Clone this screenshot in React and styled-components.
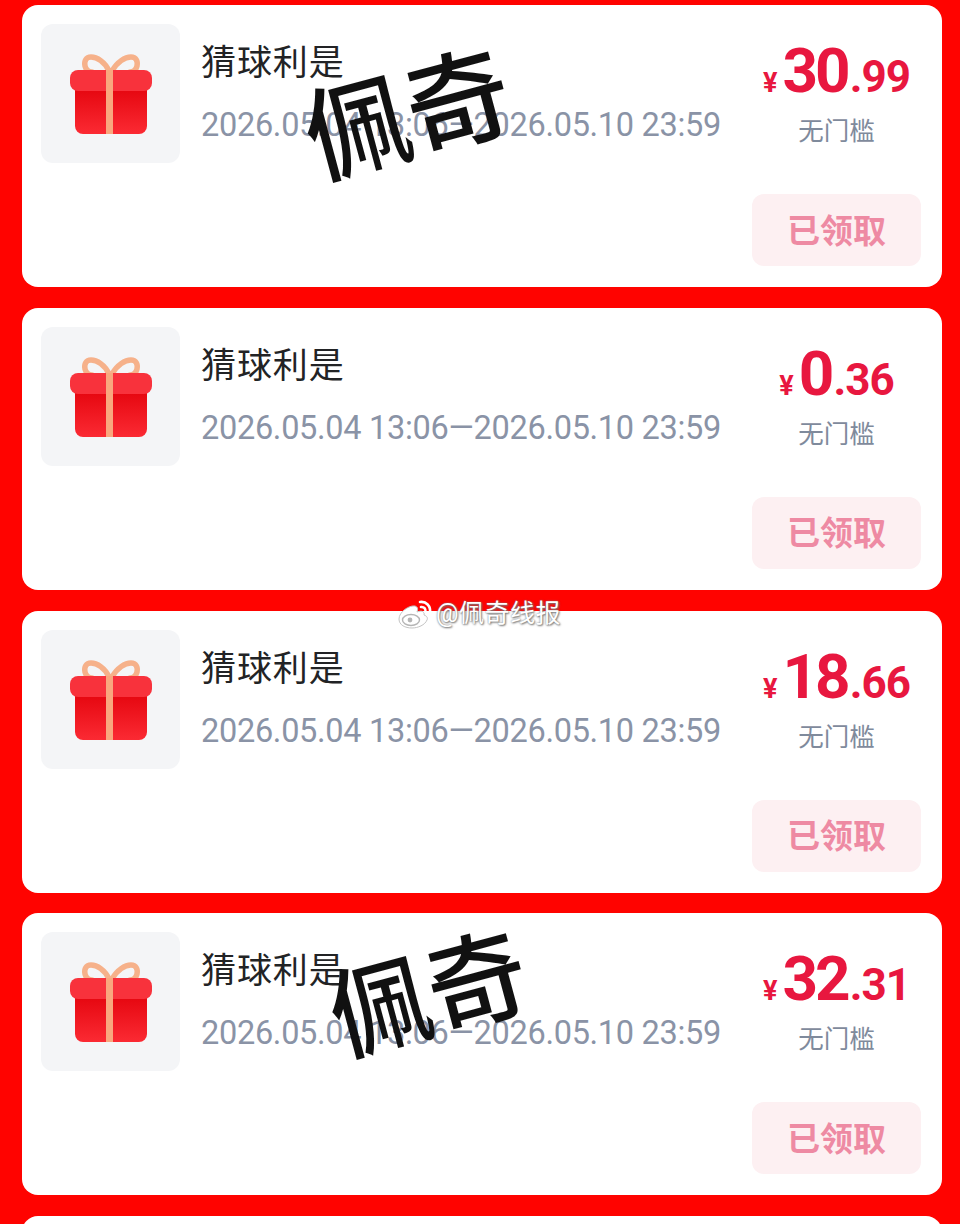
import React from 'react'
import styled, { createGlobalStyle } from 'styled-components'

const coupons = [
  { big: '30', small: '99', stamp: 'top' },
  { big: '0', small: '36' },
  { big: '18', small: '66' },
  { big: '32', small: '31', stamp: 'bottom' },
]

// component
const GiftIcon = () => (
  <svg width="84" height="84" viewBox="0 0 84 84">
    <defs>
      <linearGradient id="giftBody" x1="0" y1="0" x2="0" y2="1">
        <stop offset="0" stopColor="#e5060f" />
        <stop offset="1" stopColor="#fb2a33" />
      </linearGradient>
    </defs>
    <path d="M40 17C36 8 28 3 22 3c-5 0-7 4-6 9 1 4 4 6 7 6M43 17c5-9 13-14 19-14 5 0 7 4 6 9-1 4-4 6-7 6" fill="none" stroke="#f6b18a" strokeWidth="5.5" strokeLinecap="round" />
    <path d="M6 34h72v38a8 8 0 0 1-8 8H14a8 8 0 0 1-8-8z" fill="url(#giftBody)" />
    <rect x="1" y="16" width="82" height="21" rx="8" fill="#f8323c" />
    <rect x="37" y="16" width="7" height="64" fill="#f9a77e" />
  </svg>
)

const WeiboIcon = () => (
  <svg width="36" height="30" viewBox="0 0 36 30">
    <path d="M2 20C2 13 12 6 18 7c3 1 3 3 2 6 5-2 8 0 7 3 3 1 4 3 3 5-2 5-9 8-15 8C8 29 2 26 2 20z" fill="#fff" stroke="#c4c4c4" strokeWidth="1" />
    <ellipse cx="14" cy="21" rx="8.5" ry="5.5" fill="none" stroke="#b5b5b5" strokeWidth="1.4" />
    <circle cx="13" cy="21" r="2.4" fill="#b5b5b5" />
    <path d="M23 3c6-1 11 4 10 11M24 8c3-.5 5 2 4.5 5" fill="none" stroke="#fff" strokeWidth="2.6" strokeLinecap="round" />
  </svg>
)

const Coupon = ({ big, small, stamp }) => (
  <Card>
    <IconBox><GiftIcon /></IconBox>
    <Info>
      <Title>猜球利是</Title>
      <DateRange>2026.05.04 13:06—2026.05.10 23:59</DateRange>
    </Info>
    <Side>
      <Summary>
        <Price>
          <Yen>¥</Yen>
          <Big>{big}</Big>
          <Small>.{small}</Small>
        </Price>
        <Note>无门槛</Note>
      </Summary>
      <Claimed>已领取</Claimed>
    </Side>
    {stamp && <Stamp $place={stamp}>佩奇</Stamp>}
  </Card>
)

export default function App() {
  return (
    <Page>
      <GlobalStyle />
      {coupons.map((c, i) => (
        <Coupon key={i} {...c} />
      ))}
      {/* the next coupon only just starts at the bottom edge */}
      <Card />
      <Mark>
        <WeiboIcon />
        <MarkText>@佩奇线报</MarkText>
      </Mark>
    </Page>
  )
}

// view(CSS in JS)
const GlobalStyle = createGlobalStyle`
  html, body {
    margin: 0;
    height: 1224px;
    overflow: hidden;
    background: #ff0000;
  }
`

const Page = styled.div`
  position: relative;
  box-sizing: border-box;
  height: 1224px;
  overflow: hidden;
  padding: 5px 18px 0 22px;
  display: flex;
  flex-direction: column;
  gap: 20.75px;
  background: #ff0300;
  font-family: "Roboto", "Noto Sans CJK SC", sans-serif;
`

const Card = styled.div`
  position: relative;
  flex: 0 0 282px;
  box-sizing: border-box;
  padding: 19px 21px 21px 19px;
  display: flex;
  background: #fff;
  border-radius: 16px;
`

const IconBox = styled.div`
  flex: 0 0 139px;
  height: 139px;
  padding-top: 5px;
  box-sizing: border-box;
  display: flex;
  align-items: center;
  justify-content: center;
  background: #f4f5f7;
  border-radius: 12px;
`

const Info = styled.div`
  flex: 1;
  padding: 21px 0 0 22px;
  display: flex;
  flex-direction: column;
`

const Title = styled.div`
  font-size: 35px;
  line-height: 38px;
  letter-spacing: 0.9px;
  margin-left: -1px;
  color: #222325;
`

const DateRange = styled.div`
  margin-top: 22px;
  margin-left: -1px;
  font-size: 32.5px;
  line-height: 40px;
  letter-spacing: -0.3px;
  white-space: nowrap;
  color: #8a93a6;
`

const Side = styled.div`
  flex: 0 0 169px;
  display: flex;
  flex-direction: column;
  align-items: center;
  justify-content: space-between;
`

const Summary = styled.div`
  display: flex;
  flex-direction: column;
  align-items: center;
  padding-top: 16px;
`

const Price = styled.div`
  display: flex;
  align-items: baseline;
  font-weight: 700;
  line-height: 62px;
  color: #e8173f;
  white-space: nowrap;
`

const Yen = styled.span`
  font-size: 27px;
  margin-right: 5px;
`

const Big = styled.span`
  font-size: 62px;
  letter-spacing: -3px;
`

const Small = styled.span`
  font-size: 44px;
  letter-spacing: -1px;
  margin-left: 2px;
`

const Note = styled.div`
  font-size: 25.5px;
  line-height: 34px;
  color: #7f8a9c;
`

const Claimed = styled.div`
  height: 72px;
  width: 100%;
  padding-bottom: 3px;
  box-sizing: border-box;
  display: flex;
  align-items: center;
  justify-content: center;
  border-radius: 12px;
  background: #fdf0f2;
  color: #ee8aa3;
  font-size: 33px;
  font-weight: 700;
`

const Stamp = styled.div`
  position: absolute;
  left: ${p => (p.$place === 'top' ? '280px' : '305px')};
  top: ${p => (p.$place === 'top' ? '43px' : '15px')};
  font-size: ${p => (p.$place === 'top' ? '104px' : '100px')};
  line-height: 120px;
  font-family: "Noto Sans CJK SC", sans-serif;
  font-weight: 500;
  color: #111;
  white-space: nowrap;
  transform: rotate(-15deg);
`

const Mark = styled.div`
  position: absolute;
  left: 397px;
  top: 599px;
  display: flex;
  align-items: center;
  gap: 3px;
`

const MarkText = styled.span`
  font-size: 25px;
  line-height: 30px;
  letter-spacing: 0.5px;
  color: #fff;
  text-shadow: 0 0 2px #777, 1px 1px 2px #777;
`
